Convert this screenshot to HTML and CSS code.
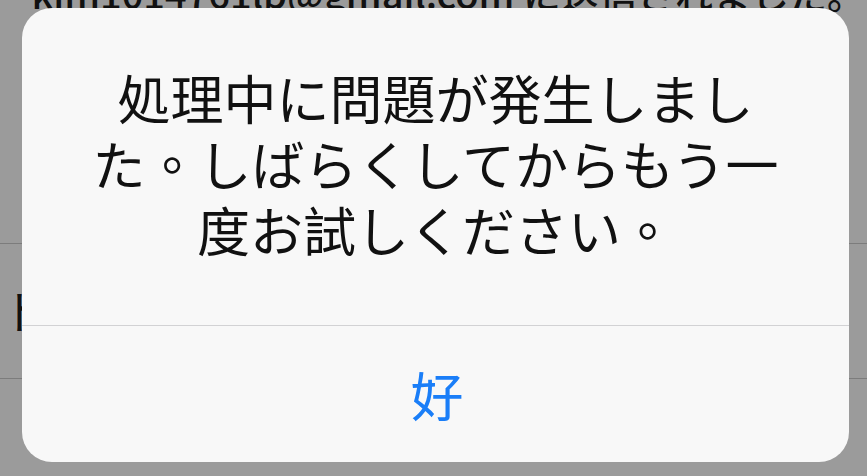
FILE: index.html
```html
<!DOCTYPE html>
<html lang="ja">
<head>
<meta charset="utf-8">
<title>Alert</title>
<link rel="stylesheet" href="styles.css">
</head>
<body>
<div class="screen">
  <div class="backdrop">
    <div class="bg-top"><span class="bg-top-text">kim1014761lb@gmail.com に送信されました。</span></div>
    <div class="bg-gap"></div>
    <div class="bg-row"><span class="bg-row-text">ト</span></div>
    <div class="bg-rest"></div>
  </div>
  <div class="alert" role="alertdialog">
    <div class="alert-body">
      <p class="alert-msg" lang="zh-Hant">処理中に問題が発生しまし<br>た。しばらくしてからもう一<br>度お試しください。</p>
    </div>
    <div class="alert-actions">
      <span class="alert-btn" lang="zh-Hant">好</span>
    </div>
  </div>
</div>
</body>
</html>
```
FILE: styles.css
```css
html, body {
  margin: 0;
  padding: 0;
  background: #9b9b9b;
}
body {
  font-family: "Noto Sans CJK JP", "Noto Sans", sans-serif;
}
.screen {
  position: relative;
  width: 867px;
  height: 476px;
  overflow: hidden;
  background: #9b9b9b;
}
.backdrop {
  display: flex;
  flex-direction: column;
  height: 100%;
}
.bg-top {
  height: 12px;
  overflow: hidden;
  display: flex;
  align-items: flex-end;
  justify-content: flex-end;
  padding-right: 2px;
}
.bg-top-text {
  font-size: 38px;
  line-height: 38px;
  font-weight: 500;
  white-space: nowrap;
  color: #111;
}
.bg-gap {
  height: 231px;
  border-bottom: 1px solid #7c7c7c;
}
.bg-row {
  height: 134px;
  border-bottom: 1px solid #7c7c7c;
  display: flex;
  align-items: center;
}
.bg-row-text {
  font-size: 46px;
  line-height: 46px;
  color: #111;
  margin-left: 2px;
  margin-top: -4px;
}
.bg-rest {
  flex: 1;
}
.alert {
  position: absolute;
  left: 22px;
  top: 8px;
  width: 827px;
  height: 454px;
  border-radius: 30px;
  background: #f8f8f8;
  display: flex;
  flex-direction: column;
  overflow: hidden;
}
.alert-body {
  height: 318px;
  box-sizing: border-box;
  padding-bottom: 8px;
  display: flex;
  align-items: center;
  justify-content: center;
  border-bottom: 1px solid #d2d2d4;
}
.alert-msg {
  margin: 0;
  font-family: "Noto Sans CJK TC", "Noto Sans CJK JP", sans-serif;
  font-size: 53px;
  line-height: 66px;
  text-align: center;
  white-space: nowrap;
  color: #111;
}
.alert-actions {
  flex: 1;
  display: flex;
  align-items: center;
  justify-content: center;
}
.alert-btn {
  font-family: "Noto Sans CJK TC", "Noto Sans CJK JP", sans-serif;
  font-size: 53px;
  line-height: 60px;
  color: #1a7ef8;
  margin-left: 3px;
}
```
